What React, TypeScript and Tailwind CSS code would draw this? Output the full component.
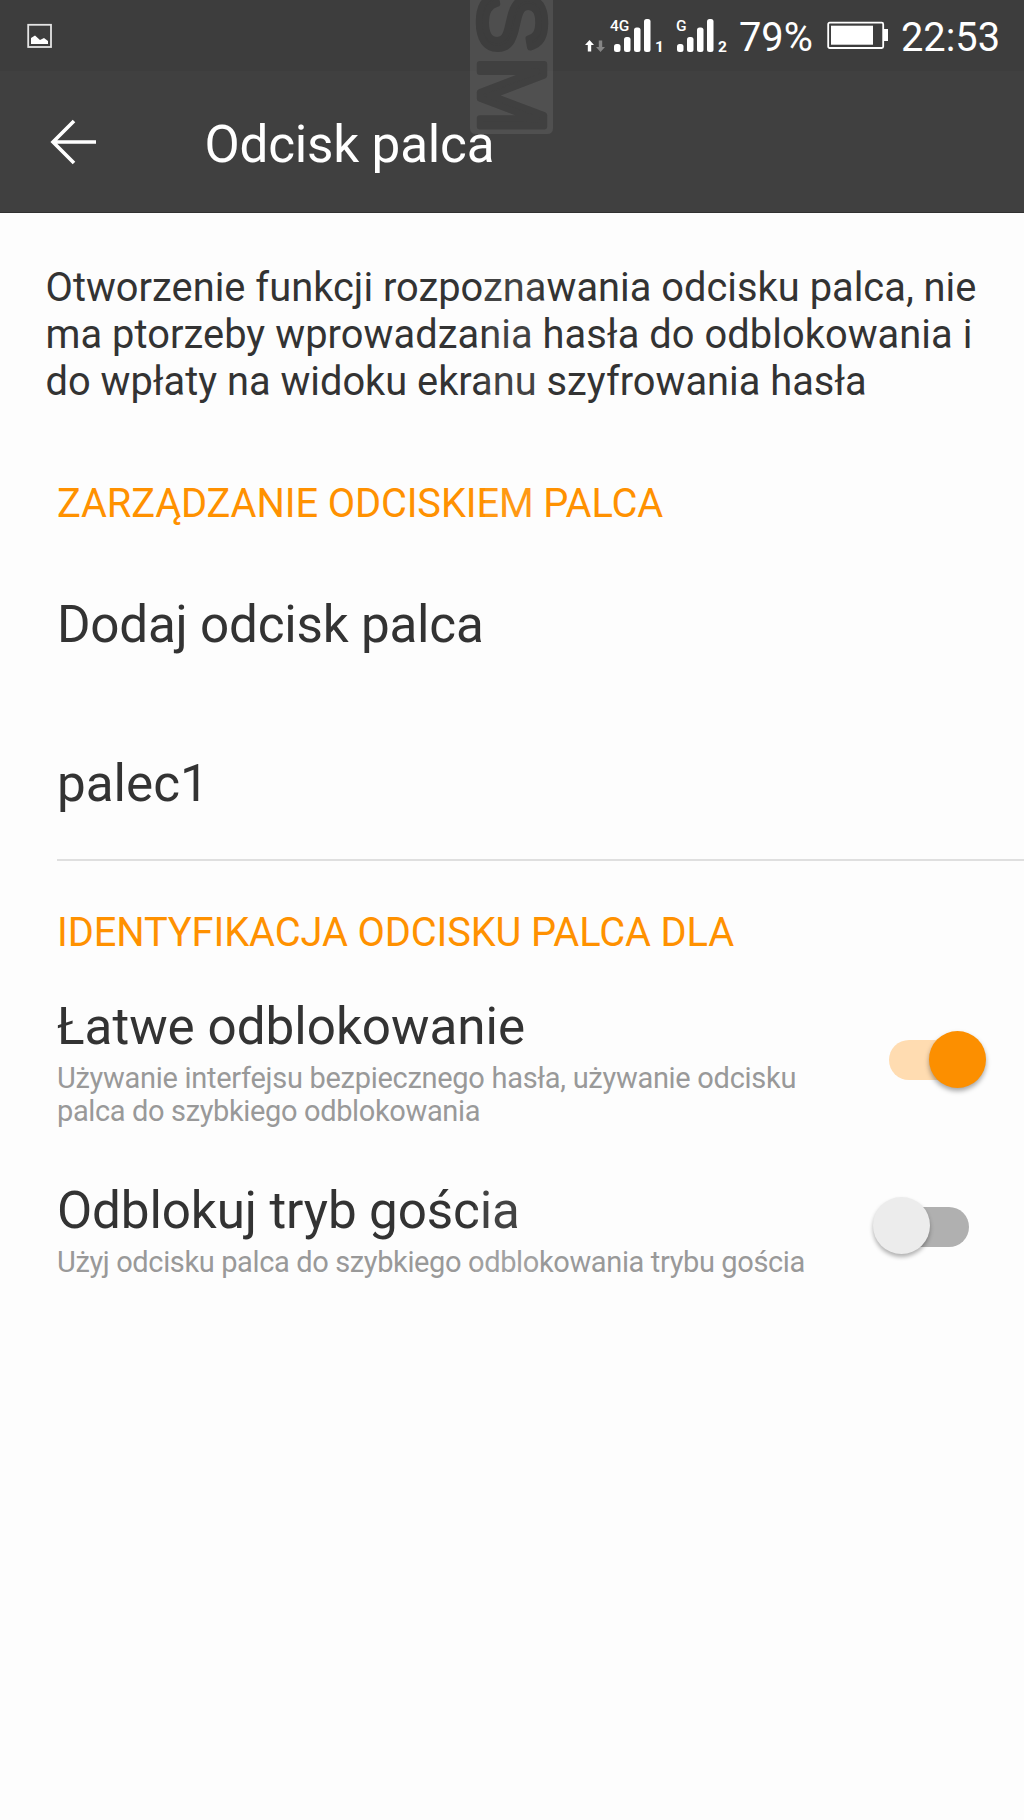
import React from 'react';

function Signal({ label, index }: { label: string; index: string }) {
  return (
    <svg className="h-[48px] w-[60px] shrink-0 overflow-visible" viewBox="0 0 60 48" fill="#fff" fontFamily="Roboto, sans-serif">
      <rect x="4" y="30" width="6.5" height="8" rx="2.5" />
      <rect x="14" y="23" width="6.5" height="15" rx="2.5" />
      <rect x="24" y="13.5" width="6.5" height="24.5" rx="2.5" />
      <rect x="34" y="5" width="6.5" height="33" rx="2.5" />
      <text x={label === 'G' ? 3 : 0} y="16.5" fontSize="15.5" fontWeight="500">{label}</text>
      <text x="45" y="38" fontSize="15.5" fontWeight="700">{index}</text>
    </svg>
  );
}

function StatusBar() {
  return (
    <div className="flex h-[71px] items-start bg-[#3d3d3d] pl-[27px] text-[39.8px] leading-[46.6px]">
      <svg className="mt-[23px] h-[26px] w-[26px]" viewBox="0 0 26 26">
        <rect x="1.2" y="1.8" width="22.8" height="22.2" fill="none" stroke="#e4e4e4" strokeWidth="1.8" />
        <path d="M4 21V15L8 12.5L13 17L17 15L21 18V21Z" fill="#fff" />
      </svg>
      <svg className="ml-[531px] mt-[39px] h-[14px] w-[22px]" viewBox="0 0 22 14">
        <path d="M5.5 1L10 6H7.2V12.5H3.8V6H1Z" fill="#fff" />
        <path d="M16.5 13L21 8H18.2V1.5H14.8V8H12Z" fill="#858585" />
      </svg>
      <div className="ml-[4px] mt-[14px]"><Signal label="4G" index="1" /></div>
      <div className="ml-[3px] mt-[14px]"><Signal label="G" index="2" /></div>
      <span className="ml-[6px] mt-[15px] w-[75px] whitespace-nowrap">79%</span>
      <svg className="ml-[13px] mt-[21px] h-[29px] w-[62px]" viewBox="0 0 62 29">
        <rect x="1.2" y="1.7" width="55" height="25.3" rx="1.5" fill="none" stroke="#fff" strokeWidth="1.8" />
        <rect x="4" y="4.7" width="42" height="19" fill="#fff" />
        <path d="M56 8H61V20H56Z" fill="#fff" />
      </svg>
      <span className="ml-[12px] mt-[15px] whitespace-nowrap">22:53</span>
    </div>
  );
}

function Toggle({ on }: { on?: boolean }) {
  return (
    <div className="relative h-[40px] w-[80px] shrink-0">
      <div className={on ? 'h-full w-full rounded-full bg-[#ffdcb1]' : 'h-full w-full rounded-full bg-[#b0b0b0]'} />
      <div
        className={
          on
            ? 'absolute left-[39.5px] -top-[9px] h-[57px] w-[57px] rounded-full bg-[#fc8f00] shadow-[0_3px_5px_rgba(0,0,0,0.35)]'
            : 'absolute -left-[16.5px] -top-[9.5px] h-[57px] w-[57px] rounded-full bg-[#ececec] shadow-[0_3px_4px_rgba(0,0,0,0.3)]'
        }
      />
    </div>
  );
}

function Watermark() {
  return (
    <div className="pointer-events-none absolute inset-0">
      <svg className="absolute left-[470px] top-0 h-[134px] w-[83px] overflow-visible" viewBox="0 0 83 134">
        <path d="M0 0H83V128Q83 134 77 134H6Q0 134 0 128Z" fill="#505050" />
        <rect x="0" y="0" width="83" height="71" fill="#4e4e4e" />
        <g transform="translate(9.5 0) rotate(90)" fontFamily="Liberation Sans, sans-serif" fontSize="93" strokeWidth="6.5" strokeLinejoin="round">
          <text x="-9" y="0" fill="#3d3d3d" stroke="#3d3d3d">S</text>
          <text x="56.5" y="0" fill="#404040" stroke="#404040">M</text>
        </g>
      </svg>
      <div className="absolute left-[485px] top-[260px] h-[270px] w-[56px] bg-white/8" />
      <div className="absolute left-[475px] top-[1190px] h-[95px] w-[65px] bg-white/8" />
    </div>
  );
}

export default function App() {
  return (
    <div className="relative h-[1820px] w-[1024px] overflow-hidden bg-[#fdfdfd] font-[Roboto,sans-serif] text-[#333333]">
      <Watermark />
      <header className="text-white">
        <StatusBar />
        <div className="flex h-[142px] items-start border-b border-[#303030] bg-[#404040] pl-[50px]">
          <svg className="mt-[48px] h-[46px] w-[46px]" viewBox="0 0 46 46" fill="none" stroke="#fff" strokeWidth="3.6">
            <path d="M24 2L3 23L24 44M3 23H46" />
          </svg>
          <h1 className="relative z-10 ml-[108.5px] mt-[43.5px] whitespace-nowrap text-[51.2px] leading-[60px] tracking-[-0.18px]">Odcisk palca</h1>
        </div>
      </header>
      <main>
        <p className="ml-[45.5px] mt-[52.4px] whitespace-nowrap text-[39.8px] leading-[46.6px]">
          <span className="tracking-[0.02px]">Otworzenie funkcji rozpoznawania odcisku palca, nie</span><br />
          <span className="tracking-[0.06px]">ma ptorzeby wprowadzania hasła do odblokowania i</span><br />
          do wpłaty na widoku ekranu szyfrowania hasła
        </p>
        <section className="ml-[57px] mt-[75.4px]">
          <h2 className="text-[39.8px] leading-[46.6px] tracking-[-0.12px] text-[#ff9100]">ZARZĄDZANIE ODCISKIEM PALCA</h2>
          <div className="mt-[68.3px] text-[51.2px] leading-[60px] tracking-[-0.22px]">Dodaj odcisk palca</div>
          <div className="mt-[98.7px] h-[106.8px] border-b-2 border-[#dfdfdf] text-[51.2px] leading-[60px]">palec1</div>
        </section>
        <section className="ml-[57px] mt-[49px]">
          <h2 className="text-[39.8px] leading-[46.6px] tracking-[-0.12px] text-[#ff9100]">IDENTYFIKACJA ODCISKU PALCA DLA</h2>
          <div className="mt-[40.8px] flex justify-between pr-[55px]">
            <div className="whitespace-nowrap">
              <div className="text-[51.2px] leading-[60px]">Łatwe odblokowanie</div>
              <p className="mt-[4.5px] text-[29px] leading-[33.3px] text-[#999999]">
                <span className="tracking-[-0.29px]">Używanie interfejsu bezpiecznego hasła, używanie odcisku</span><br />
                <span className="tracking-[-0.36px]">palca do szybkiego odblokowania</span>
              </p>
            </div>
            <div className="pt-[42.5px]"><Toggle on /></div>
          </div>
          <div className="mt-[51.6px] flex justify-between pr-[55px]">
            <div className="whitespace-nowrap">
              <div className="pt-[1px] text-[51.2px] leading-[60px] tracking-[-0.12px]">Odblokuj tryb gościa</div>
              <p className="mt-[4.5px] text-[29px] leading-[33.3px] tracking-[-0.37px] text-[#999999]">
                Użyj odcisku palca do szybkiego odblokowania trybu gościa
              </p>
            </div>
            <div className="pt-[26.5px]"><Toggle /></div>
          </div>
        </section>
      </main>
    </div>
  );
}
